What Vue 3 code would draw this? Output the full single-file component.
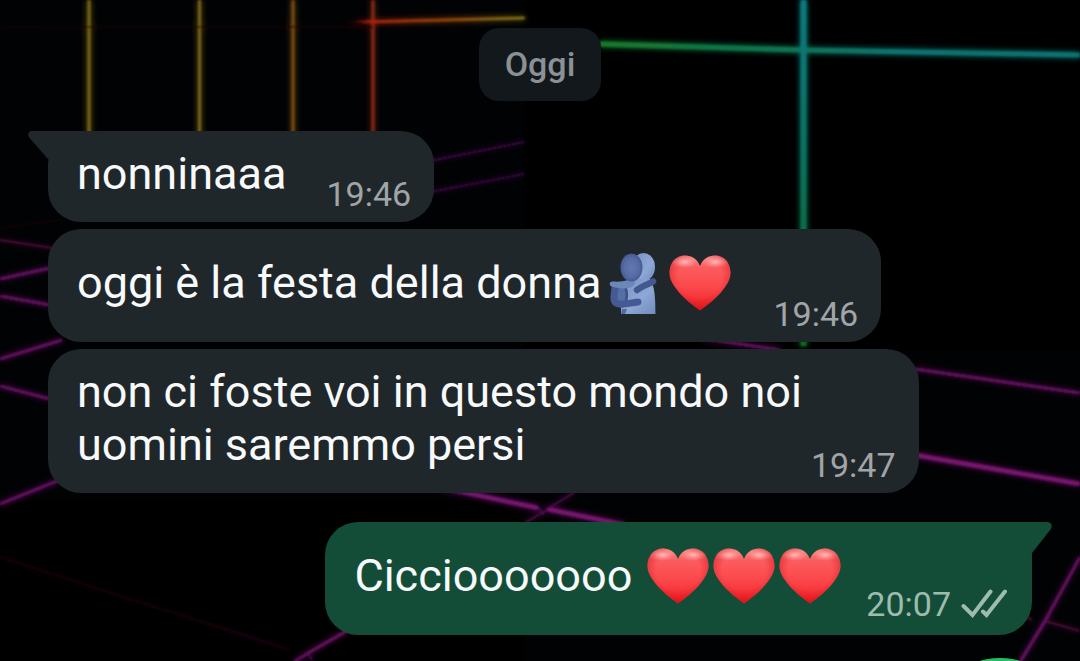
<script setup>
const messages = [
  { id: 1, text: 'nonninaaa', emoji: [], time: '19:46', side: 'in', tail: true },
  { id: 2, text: 'oggi è la festa della donna', emoji: ['hug', 'heart'], time: '19:46', side: 'in' },
  { id: 3, text: 'non ci foste voi in questo mondo noi\nuomini saremmo persi', emoji: [], time: '19:47', side: 'in', multi: true },
  { id: 4, text: 'Cicciooooooo', emoji: ['heart', 'heart', 'heart'], time: '20:07', side: 'out', tail: true, gap: true },
]
</script>

<template>
  <main class="chat">
    <svg class="wallpaper" viewBox="0 0 1080 661" preserveAspectRatio="xMidYMin slice" aria-hidden="true">
      <defs>
        <linearGradient id="beam" gradientUnits="userSpaceOnUse" x1="350" y1="0" x2="524" y2="0">
          <stop offset="0" stop-color="#a01808" stop-opacity="0" />
          <stop offset=".12" stop-color="#a82010" />
          <stop offset=".5" stop-color="#98400e" />
          <stop offset="1" stop-color="#8a7a18" />
        </linearGradient>
        <linearGradient id="horizon" gradientUnits="userSpaceOnUse" x1="600" y1="0" x2="900" y2="0">
          <stop offset="0" stop-color="#137a2a" />
          <stop offset=".6" stop-color="#107452" />
          <stop offset="1" stop-color="#0b7270" />
        </linearGradient>
        <linearGradient id="mast" gradientUnits="userSpaceOnUse" x1="0" y1="0" x2="0" y2="346">
          <stop offset="0" stop-color="#0a787c" />
          <stop offset=".35" stop-color="#087165" />
          <stop offset=".65" stop-color="#086c4a" />
          <stop offset="1" stop-color="#0c6a24" />
        </linearGradient>
        <filter id="soft" filterUnits="userSpaceOnUse" x="0" y="0" width="1080" height="661">
          <feGaussianBlur stdDeviation="3" />
        </filter>
        <filter id="edge" filterUnits="userSpaceOnUse" x="0" y="0" width="1080" height="661">
          <feGaussianBlur stdDeviation="0.8" />
        </filter>
        <g id="grid" fill="none">
          <path d="M89 0V140" stroke="#7c6818" stroke-width="3" />
          <path d="M199.500 0V140" stroke="#7c6216" stroke-width="3" />
          <path d="M293 0V140" stroke="#7c4c14" stroke-width="3" />
          <path d="M373 0V140" stroke="#842a14" stroke-width="3" />
          <path d="M350 21.500L373 21L524 17.500V18.500L373 22.500Z" stroke="url(#beam)" stroke-width="1.600" />
          <path d="M600 44L803 50L1080 55" stroke="url(#horizon)" stroke-width="5" />
          <path d="M803.500 0V346" stroke="url(#mast)" stroke-width="6" />
          <g stroke="#6c1466" stroke-width="2.600">
            <path d="M0 279L50 268M0 296L50 305M0 359L62 340M0 386L50 399M0 504L62 479" />
            <path d="M700 338L780 350M915 369L1080 393" />
            <path d="M1020 662L1045 621L1080 557M294 662L308 653L350 629" />
          </g>
          <path d="M0 240L52 248M1045 621L1080 631M1027 617L1032 620" stroke="#5c1240" stroke-width="1.600" />
          <path d="M430 485L538 508M547 509L625 525M915 455L1080 484" stroke="#7a1472" stroke-width="4" />
          <path d="M538 507L543 514L547 509L575 492M543 512L525 523M308 653L312 660" stroke="#52104e" stroke-width="1.600" />
          <path d="M425 162L524 142M425 193L524 174" stroke="#46104a" stroke-width="1.400" />
          <path d="M0 557L95 588L200 621L290 650" stroke="#260820" stroke-width="1.300" />
          <path d="M0 228L60 220M0 28L85 27H373" stroke="#180505" stroke-width="1.300" />
        </g>
      </defs>
      <rect width="524" height="500" fill="#000204" />
      <rect x="524" y="350" width="556" height="311" fill="#000203" />
      <use href="#grid" filter="url(#soft)" />
      <use href="#grid" filter="url(#edge)" />
    </svg>

    <svg class="symbols" aria-hidden="true">
      <defs>
        <linearGradient id="heartFill" x1="0" y1="0" x2="0" y2="1">
          <stop offset="0" stop-color="#ff8d8d" />
          <stop offset=".22" stop-color="#fb5c5e" />
          <stop offset=".6" stop-color="#fb4649" />
          <stop offset="1" stop-color="#ee1f24" />
        </linearGradient>
        <radialGradient id="heartShade" cx=".5" cy=".4" r=".6">
          <stop offset=".6" stop-color="#d80d18" stop-opacity="0" />
          <stop offset="1" stop-color="#cc0814" stop-opacity=".6" />
        </radialGradient>
        <radialGradient id="shine">
          <stop offset="0" stop-color="#ffd0cc" stop-opacity=".8" />
          <stop offset="1" stop-color="#ff9a98" stop-opacity="0" />
        </radialGradient>
        <linearGradient id="paleBlue" x1="0" y1="0" x2="1" y2="1">
          <stop offset="0" stop-color="#7590bf" />
          <stop offset=".6" stop-color="#8ea8d6" />
          <stop offset="1" stop-color="#708bbd" />
        </linearGradient>
        <radialGradient id="headBlue">
          <stop offset="0" stop-color="#6177b0" />
          <stop offset=".7" stop-color="#566ba4" />
          <stop offset="1" stop-color="#455a92" />
        </radialGradient>
        <symbol id="heart" viewBox="0 0 66 66">
          <path d="M33 60.500C29 57.500 16 48.500 9 38.500C4.500 32.500 2.500 28 2.500 22.500C2.500 12.500 9.500 5.500 18 5.500C25 5.500 30.500 9.500 33 16C35.500 9.500 41 5.500 48 5.500C56.500 5.500 63.500 12.500 63.500 22.500C63.500 28 61.500 32.500 57 38.500C50 48.500 37 57.500 33 60.500Z" fill="url(#heartFill)" />
          <path d="M33 60.500C29 57.500 16 48.500 9 38.500C4.500 32.500 2.500 28 2.500 22.500C2.500 12.500 9.500 5.500 18 5.500C25 5.500 30.500 9.500 33 16C35.500 9.500 41 5.500 48 5.500C56.500 5.500 63.500 12.500 63.500 22.500C63.500 28 61.500 32.500 57 38.500C50 48.500 37 57.500 33 60.500Z" fill="url(#heartShade)" />
          <ellipse cx="17.500" cy="12" rx="13" ry="6" fill="url(#shine)" />
          <ellipse cx="48.500" cy="12" rx="13" ry="6" fill="url(#shine)" />
        </symbol>
        <symbol id="hug" viewBox="0 0 66 66">
          <ellipse cx="42.500" cy="17" rx="11.500" ry="14" fill="url(#paleBlue)" />
          <path d="M12 34C20 35 26 30 35 29H49C53 36 54.500 43 54.500 64H20V38Z" fill="url(#paleBlue)" />
          <path d="M12 35H25C27 40 27 46 26 52L20 58L12 52Z" fill="#566ea6" />
          <path d="M24.500 38C26.500 43 26 48 24.500 52" stroke="#3d5289" stroke-width="2.500" stroke-linecap="round" fill="none" />
          <path d="M14 38C13 46 12 51 15 53C20 56 28 53 37 52" stroke="#455a94" stroke-width="7" stroke-linecap="round" stroke-linejoin="round" fill="none" />
          <path d="M12 31.500C19 32 25 31 30 29C35 29 35 33 32 36C27 40 18 38 12 37C7 36 8 31 12 31.500Z" fill="#6c88b8" />
          <ellipse cx="30.500" cy="17.500" rx="11" ry="14" fill="url(#headBlue)" />
          <path d="M36 40C41 36 46 35 52 31.500" stroke="#43588f" stroke-width="6.500" stroke-linecap="round" fill="none" />
          <path d="M21 59H26L24 64H20Z" fill="#536aa2" />
        </symbol>
      </defs>
    </svg>

    <div class="day">Oggi</div>

    <section class="thread" aria-label="Messaggi">
      <article
        v-for="m in messages"
        :key="m.id"
        class="bubble"
        :class="[m.side, { multi: m.multi, gap: m.gap }]"
      >
        <svg v-if="m.tail && m.side === 'in'" class="tail" viewBox="0 0 60 28" aria-hidden="true">
          <path d="M60 0H4C0 0-1 4 1.500 7L20 28H60Z" />
        </svg>
        <svg v-if="m.tail && m.side === 'out'" class="tail" viewBox="0 0 60 31" aria-hidden="true">
          <path d="M0 0H55C59.500 0 61 4 58.500 7.500L40 31H0Z" />
        </svg>
        <p class="text" :class="{ tall: m.emoji.length }">{{ m.text }}<svg
          v-for="(e, i) in m.emoji"
          :key="i"
          class="emoji"
          role="img"
          :aria-label="e === 'heart' ? 'cuore rosso' : 'abbraccio'"
        ><use :href="'#' + e" /></svg></p>
        <div class="meta">
          <time>{{ m.time }}</time>
          <svg v-if="m.side === 'out'" class="ticks" viewBox="0 0 46 30" role="img" aria-label="Consegnato">
            <path d="M2.500 17L11.500 26L29.500 2.500M22 22.500L25.500 26L44 2.500" />
          </svg>
        </div>
      </article>
      <article class="bubble in next"></article>
    </section>

    <button class="fab" type="button" aria-label="Messaggio vocale"></button>
  </main>
</template>

<style>
body {
  margin: 0;
  background: #000;
}
</style>

<style scoped>
.chat {
  position: relative;
  box-sizing: border-box;
  height: 100vh;
  padding: 28px 48px 0;
  overflow: hidden;
  display: flex;
  flex-direction: column;
  align-items: center;
  background: #000;
  font-family: Roboto, "Liberation Sans", sans-serif;
}
.wallpaper {
  position: absolute;
  inset: 0;
  width: 100%;
  height: 100%;
}
.symbols {
  position: absolute;
  width: 0;
  height: 0;
}
.day {
  position: relative;
  flex: none;
  padding: 0 26px;
  border-radius: 20px;
  background: #12181c;
  color: #8b9194;
  font-size: 34px;
  font-weight: 500;
  line-height: 73px;
}
.thread {
  position: relative;
  align-self: stretch;
  display: flex;
  flex-direction: column;
  align-items: flex-start;
  gap: 7px;
  margin-top: 30px;
}
.bubble {
  position: relative;
  box-sizing: border-box;
  display: flex;
  align-items: flex-end;
  gap: 40px;
  padding: 16px 23px 0 29px;
  border-radius: 33px;
  background: #20272b;
  color: #f7f9fa;
}
.bubble.out {
  align-self: flex-end;
  gap: 23px;
  padding-right: 25px;
  background: #144d37;
}
.bubble.multi {
  gap: 9px;
}
.bubble.gap {
  margin-top: 22px;
}
.tail {
  position: absolute;
  top: 0;
  width: 60px;
}
.in .tail {
  left: -20px;
  fill: #20272b;
}
.out .tail {
  right: -20px;
  fill: #144d37;
}
.text {
  position: relative;
  margin: 0;
  padding-bottom: 22px;
  font-size: 45px;
  line-height: 53px;
  white-space: pre-wrap;
}
.text.tall {
  line-height: 75px;
}
.emoji {
  width: 66px;
  height: 66px;
  vertical-align: -18px;
}
.out .emoji:first-child {
  margin-left: 13px;
}
.meta {
  position: relative;
  display: flex;
  align-items: center;
  gap: 10px;
  padding-bottom: 8px;
  color: #a1a5a7;
  font-size: 34px;
  line-height: 40px;
}
.out .meta {
  padding-bottom: 11px;
  color: #9dbbae;
}
.ticks {
  width: 46px;
  height: 30px;
  fill: none;
  stroke: currentColor;
  stroke-width: 4;
  stroke-linecap: round;
}
.next {
  width: 85%;
  height: 92px;
  margin-top: 19px;
}
.fab {
  position: absolute;
  right: 10px;
  bottom: -137px;
  width: 140px;
  height: 140px;
  border: 0;
  border-radius: 50%;
  background: #21c063;
}
</style>
